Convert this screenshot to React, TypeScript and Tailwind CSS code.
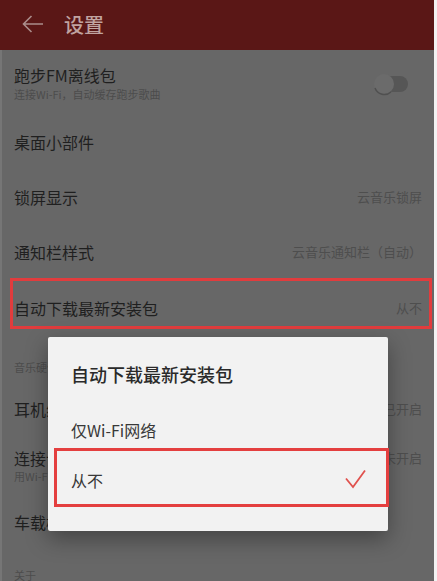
import React from "react";

const font = { fontFamily: '"Noto Sans CJK SC", "Noto Sans", sans-serif' };

function Row({
  title,
  right,
  h,
  children,
}: {
  title: string;
  right?: string;
  h: string;
  children?: React.ReactNode;
}) {
  return (
    <div className={`relative flex items-center justify-between pr-[12px] ${h}`}>
      <span className="text-[16px] leading-[22px] text-[#1f1f1f]">{title}</span>
      {right && <span className="text-[13px] leading-[18px] text-[#4e4e4e]">{right}</span>}
      {children}
    </div>
  );
}

export default function App() {
  return (
    <div className="w-[437px] h-[581px] overflow-hidden bg-[#f2f2f2]" style={font}>
      <div className="relative w-[434px] h-[581px] bg-[#676767]">
        {/* Header */}
        <div className="h-[50px] bg-[#5a1716] flex items-center pl-[22px] gap-[20px]">
          <svg width="22" height="18" viewBox="0 0 22 18" className="-mt-[3px]">
            <path d="M21 9H1.5M9.5 1L1.5 9l8 8" fill="none" stroke="#ab8d8b" strokeWidth="1.6" />
          </svg>
          <span className="text-[20px] leading-[26px] font-medium text-[#c0a3a0]">设置</span>
        </div>

        <div className="border-l-[2px] border-[#767676]">
          {/* Row 1 */}
          <div className="h-[64px] flex items-center justify-between pl-[12px] pr-[22px]">
            <div className="flex flex-col pt-[2px]">
              <span className="text-[16px] leading-[22px] text-[#1f1f1f]">跑步FM离线包</span>
              <span className="text-[11px] leading-[16px] text-[#4c4c4c]">连接Wi-Fi，自动缓存跑步歌曲</span>
            </div>
            <svg width="40" height="26" viewBox="0 0 40 26" className="mt-[4px]">
              <rect x="12" y="5" width="24" height="16" rx="8" fill="#565656" />
              <circle cx="12" cy="13" r="10" fill="#6b6b6b" />
              <path d="M3 17 A10 10 0 0 0 19 21" fill="none" stroke="#505050" strokeWidth="1.5" />
            </svg>
          </div>
          <Row title="桌面小部件" h="h-[55px] pl-[12px]" />
          <Row title="锁屏显示" right="云音乐锁屏" h="h-[55px] pl-[12px]" />
          <Row title="通知栏样式" right="云音乐通知栏（自动）" h="h-[55px] pl-[12px]" />
          <Row title="自动下载最新安装包" right="从不" h="h-[55px] pl-[12px] pt-[2px]">
            <div className="absolute left-[8px] right-[2px] top-[-1px] h-[51px] border-[3px] border-[#e13c3d]" />
          </Row>
          <div className="h-[48px] pl-[12px] pt-[25px]">
            <span className="text-[11px] leading-[16px] text-[#4c4c4c] block">音乐硬件</span>
          </div>
          <Row title="耳机线控" right="已开启" h="h-[54px] pl-[12px]" />
          <div className="h-[58px] flex items-start justify-between pl-[12px] pr-[12px] pt-[11px]">
            <div className="flex flex-col">
              <span className="text-[16px] leading-[22px] text-[#1f1f1f]">连接设备</span>
              <span className="text-[11px] leading-[15px] text-[#4c4c4c]">用Wi-Fi连接设备</span>
            </div>
            <span className="text-[13px] leading-[18px] text-[#4e4e4e] mt-[2px]">未开启</span>
          </div>
          <Row title="车载模式" h="h-[55px] pl-[12px]" />
          <div className="h-[60px] pl-[12px] pt-[18px]">
            <span className="text-[11px] leading-[16px] text-[#4c4c4c] block">关于</span>
          </div>
        </div>

        {/* Dialog */}
        <div className="absolute left-[48px] top-[337px] w-[340px] h-[194px] bg-[#f2f2f2] rounded-[2px] shadow-[0_8px_22px_rgba(0,0,0,0.35)]">
          <div className="pl-[23px] pt-[24px] h-[68px]">
            <span className="text-[18px] leading-[26px] font-medium text-[#2a2a2a]">自动下载最新安装包</span>
          </div>
          <div className="h-[50px] flex items-center pl-[23px]">
            <span className="text-[16px] leading-[22px] text-[#383838]">仅Wi-Fi网络</span>
          </div>
          <div className="h-[50px] flex items-center justify-between pl-[23px] pr-[22px]">
            <span className="text-[16px] leading-[22px] text-[#383838]">从不</span>
            <svg width="21" height="20" viewBox="0 0 21 20" className="-mt-[2px]">
              <path d="M1 9.5L8 18L20 1.5" fill="none" stroke="#e0524e" strokeWidth="1.8" />
            </svg>
          </div>
          <div className="absolute left-[6px] top-[111px] w-[335px] h-[59px] border-[3px] border-[#e43f3f]" />
        </div>
      </div>
    </div>
  );
}
